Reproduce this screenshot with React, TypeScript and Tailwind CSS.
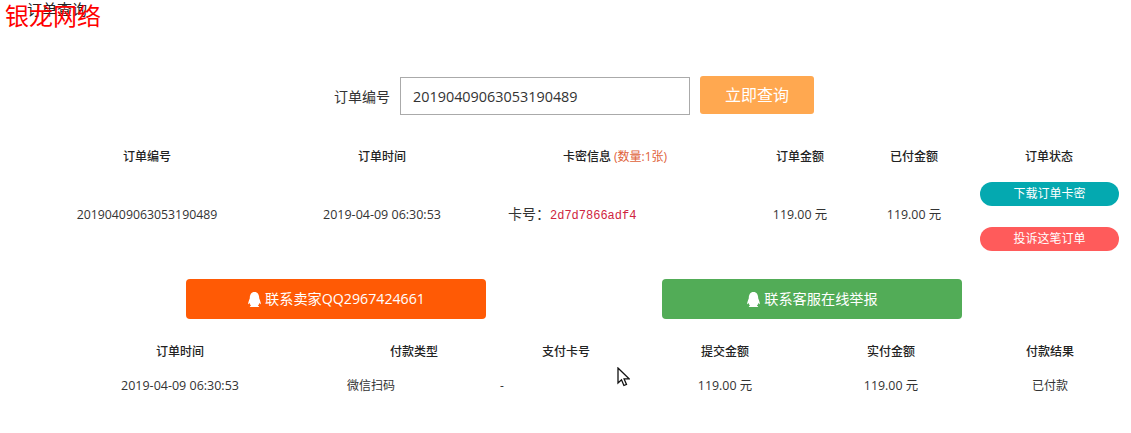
import { FaQq } from 'react-icons/fa'

const cnFont = "font-['Open_Sans','Noto_Sans_CJK_SC',sans-serif]"

function QqButton({ label, color }: { label: string; color: string }) {
  return (
    <a className={`flex h-10 w-[300px] items-center justify-center gap-[3px] rounded-[4px] text-[14.2px] text-white ${color}`}>
      <FaQq className="h-[15px] w-[15px]" />
      {label}
    </a>
  )
}

function Cursor() {
  return (
    <svg className="absolute left-[617px] top-[367px]" width="13" height="20" viewBox="0 0 13 20">
      <path d="M1 1v15l3.5-3.2 2.4 5.7 2.6-1.1-2.4-5.5h5z" fill="#fff" stroke="#111" strokeWidth="1.3" strokeLinejoin="miter" />
    </svg>
  )
}

export default function App() {
  return (
    <div className={`relative h-[433px] w-[1131px] overflow-hidden bg-white text-[12px] text-[#333] ${cnFont}`}>
      <h1 className="absolute left-[27px] top-[-1px] text-[15px] leading-5 font-normal text-[#222]">订单查询</h1>
      <div className="absolute left-[5px] top-[1px] text-[24px] leading-[30px] text-[#f00]">银龙网络</div>

      <form className="flex items-start pt-[76px] pl-[334px]">
        <label className="mt-[1px] flex h-[38px] w-[66px] items-center text-[14px]">订单编号</label>
        <input
          readOnly
          value="20190409063053190489"
          className="mt-[1px] h-[38px] w-[290px] border border-[#aaa] px-3 text-[14.4px] text-[#333] outline-none"
        />
        <button type="button" className="ml-[10px] h-[38px] w-[114px] rounded-[3px] bg-[#ffa850] text-[16px] text-white">
          立即查询
        </button>
      </form>

      <div className="mt-[33px] ml-[30px] grid grid-cols-[234px_236px_230px_140px_88px_182px] items-center text-center">
        <div className="font-medium text-[#222]">订单编号</div>
        <div className="font-medium text-[#222]">订单时间</div>
        <div className="font-medium text-[#222]">
          卡密信息 <span className="font-normal text-[#e0623a]">(数量:1张)</span>
        </div>
        <div className="font-medium text-[#222]">订单金额</div>
        <div className="font-medium text-[#222]">已付金额</div>
        <div className="font-medium text-[#222]">订单状态</div>

        <div className="mt-[14px] text-[12.3px]">20190409063053190489</div>
        <div className="mt-[14px] text-[12.5px]">2019-04-09 06:30:53</div>
        <div className="mt-[11px] pl-2 text-left">
          <span className="text-[14px]">卡号：</span>
          <code className="font-['Liberation_Mono',monospace] text-[12px] text-[#cf2440]">2d7d7866adf4</code>
        </div>
        <div className="mt-[14px] text-[12.4px]">119.00 元</div>
        <div className="mt-[14px] text-[12.4px]">119.00 元</div>
        <div className="mt-[16px] flex flex-col gap-[21px] pl-[22px]">
          <a className="flex h-6 w-[139px] items-center justify-center rounded-full bg-[#04a9b0] text-white">下载订单卡密</a>
          <a className="flex h-6 w-[139px] items-center justify-center rounded-full bg-[#ff5b5b] text-white">投诉这笔订单</a>
        </div>
      </div>

      <div className="mt-[28px] ml-[186px] flex gap-[176px]">
        <QqButton label="联系卖家QQ2967424661" color="bg-[#ff5a05]" />
        <QqButton label="联系客服在线举报" color="bg-[#52ac57]" />
      </div>

      <div className="mt-[24px] ml-[30px] grid grid-cols-[300px_168px_136px_182px_150px_168px] gap-y-[16px] text-center">
        <div className="font-medium text-[#222]">订单时间</div>
        <div className="font-medium text-[#222]">付款类型</div>
        <div className="font-medium text-[#222]">支付卡号</div>
        <div className="font-medium text-[#222]">提交金额</div>
        <div className="font-medium text-[#222]">实付金额</div>
        <div className="font-medium text-[#222]">付款结果</div>

        <div className="text-[12.5px]">2019-04-09 06:30:53</div>
        <div className="pl-[17px] text-left">微信扫码</div>
        <div className="pl-[2px] text-left">-</div>
        <div className="text-[12.4px]">119.00 元</div>
        <div className="text-[12.4px]">119.00 元</div>
        <div>已付款</div>
      </div>

      <Cursor />
    </div>
  )
}
